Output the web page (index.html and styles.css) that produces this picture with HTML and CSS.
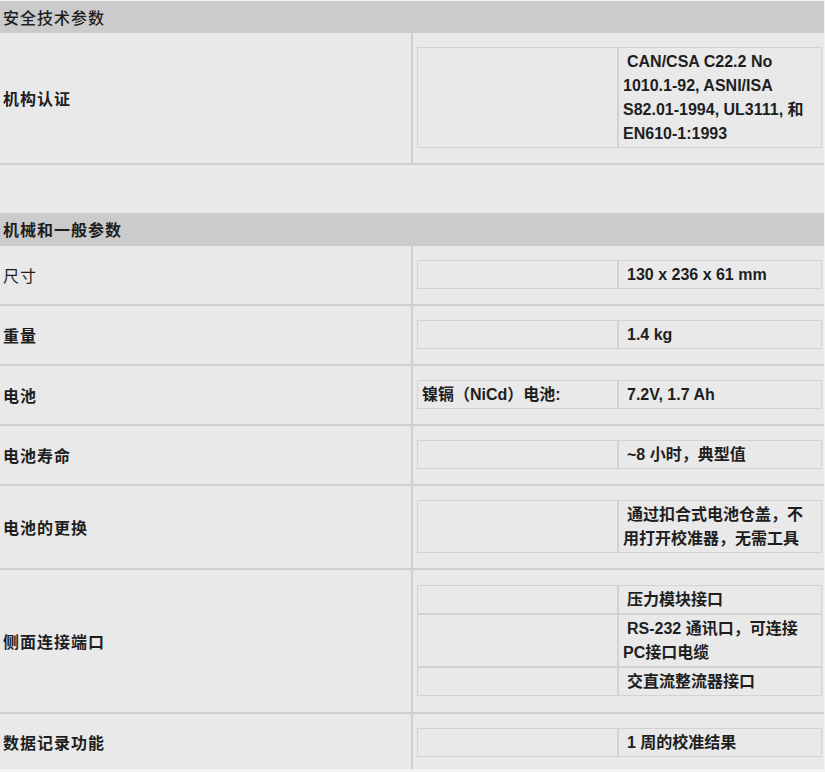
FILE: index.html
```html
<!DOCTYPE html>
<html lang="zh-CN">
<head>
<meta charset="utf-8">
<title>技术参数</title>
<link rel="stylesheet" href="styles.css">
</head>
<body>
<div class="spec">
  <div class="sec">安全技术参数</div>

  <div class="label">机构认证</div>
  <div class="val">
    <div class="kv">
      <div class="k"></div>
      <div class="v">CAN/CSA C22.2 No 1010.1-92, ASNI/ISA S82.01-1994, UL3111, 和 EN610-1:1993</div>
    </div>
  </div>

  <div class="gap"></div>

  <div class="sec bold">机械和一般参数</div>

  <div class="label normal">尺寸</div>
  <div class="val">
    <div class="kv"><div class="k"></div><div class="v">130 x 236 x 61 mm</div></div>
  </div>

  <div class="label">重量</div>
  <div class="val">
    <div class="kv"><div class="k"></div><div class="v">1.4 kg</div></div>
  </div>

  <div class="label">电池</div>
  <div class="val">
    <div class="kv"><div class="k">镍镉（NiCd）电池:</div><div class="v">7.2V, 1.7 Ah</div></div>
  </div>

  <div class="label">电池寿命</div>
  <div class="val">
    <div class="kv"><div class="k"></div><div class="v">~8 小时，典型值</div></div>
  </div>

  <div class="label">电池的更换</div>
  <div class="val">
    <div class="kv"><div class="k"></div><div class="v">通过扣合式电池仓盖，不用打开校准器，无需工具</div></div>
  </div>

  <div class="label">侧面连接端口</div>
  <div class="val multi">
    <div class="kv">
      <div class="k"></div><div class="v">压力模块接口</div>
      <div class="k"></div><div class="v">RS-232 通讯口，可连接PC接口电缆</div>
      <div class="k"></div><div class="v">交直流整流器接口</div>
    </div>
  </div>

  <div class="label last">数据记录功能</div>
  <div class="val last">
    <div class="kv"><div class="k"></div><div class="v">1 周的校准结果</div></div>
  </div>
</div>
</body>
</html>
```

FILE: styles.css
```css
html, body {
  margin: 0;
  padding: 0;
}
body {
  background: #f4f4f4;
  color: #1e1e1e;
  font-family: "Liberation Sans", "Noto Sans CJK SC", sans-serif;
}
.spec {
  display: grid;
  grid-template-columns: 413px 411px;
  width: 824px;
  margin-top: 1px;
  background: #e9e9e9;
}
.sec {
  grid-column: 1 / -1;
  height: 32px;
  background: #cbcbcb;
  display: flex;
  align-items: center;
  padding-left: 3px;
  padding-bottom: 1px;
  box-sizing: border-box;
  font-family: "Noto Sans CJK SC", sans-serif;
  font-size: 16px;
  letter-spacing: 1px;
  font-weight: 500;
}
.sec.bold {
  font-weight: 700;
  height: 33px;
}
.gap {
  grid-column: 1 / -1;
  height: 48px;
}
.label {
  display: flex;
  align-items: center;
  padding-left: 3px;
  border-right: 2px solid #cfcfcf;
  border-bottom: 2px solid #cfcfcf;
  font-family: "Noto Sans CJK SC", sans-serif;
  font-size: 16px;
  font-weight: 700;
  letter-spacing: 1px;
}
.label.normal {
  font-weight: 400;
}
.val {
  padding: 14px 2px 15px 4px;
  border-bottom: 2px solid #cfcfcf;
}
.val.multi {
  padding-top: 15px;
  padding-bottom: 16px;
}
.label.last,
.val.last {
  border-bottom: 0;
}
.val.last {
  padding-bottom: 12px;
}
.kv {
  display: grid;
  grid-template-columns: 201px 204px;
  font-size: 16px;
  font-weight: 700;
  line-height: 24px;
}
.k,
.v {
  border: 1px solid #d2d2d2;
  padding: 2px 4px 1px 4px;
}
.v {
  text-indent: 4px;
}
```
